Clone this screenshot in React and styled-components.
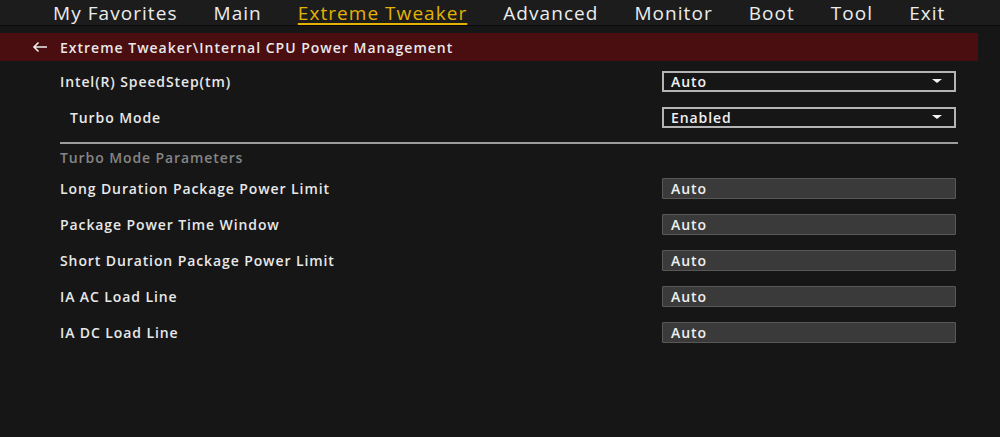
import styled, { createGlobalStyle } from 'styled-components';

const GlobalStyle = createGlobalStyle`
    body {
        margin: 0;
        background: #161616;
        font-family: 'Open Sans', 'Noto Sans', sans-serif;
        color: #e6e6e6;
    }
`;

const Page = styled.div`
    width: 1000px;
    height: 437px;
    overflow: hidden;
    background: #161616;
`;

const Nav = styled.div`
    height: 25px;
    display: flex;
    align-items: center;
    padding-left: 53px;
    gap: 36px;
    background: #1c1c1c;
    border-bottom: 1px solid #0a0a0a;
`;

const Tab = styled.div`
    font-size: 19px;
    font-weight: 500;
    letter-spacing: 1.05px;
    line-height: 26px;
    color: ${(props) => (props.active ? '#e3b204' : '#ececec')};
    text-decoration: ${(props) => (props.active ? 'underline' : 'none')};
    text-decoration-thickness: 2px;
    text-underline-offset: 3px;
`;

const Crumb = styled.div`
    margin-top: 7px;
    width: 978px;
    height: 28px;
    display: flex;
    align-items: center;
    padding-left: 32px;
    box-sizing: border-box;
    background: #4a0d10;
    font-size: 14px;
    font-weight: 600;
    letter-spacing: 1px;
    color: #e8e8e8;
`;

const Arrow = styled.svg`
    width: 16px;
    height: 12px;
    margin-right: 12px;
`;

const Content = styled.div`
    margin-top: 2px;
    padding-left: 60px;
    width: 898px;
`;

const Row = styled.div`
    height: 36px;
    display: grid;
    grid-template-columns: 1fr 294px;
    align-items: center;
    width: 896px;
`;

const Label = styled.div`
    font-size: 14px;
    font-weight: 600;
    letter-spacing: 0.9px;
    color: #e8e8e8;
    padding-left: ${(props) => (props.indent ? '10px' : '0')};
`;

const Select = styled.div`
    height: 21px;
    box-sizing: border-box;
    border: 2px solid #b4b4b4;
    display: flex;
    align-items: center;
    justify-content: space-between;
    padding: 0 12px 0 7px;
    font-size: 14px;
    font-weight: 600;
    letter-spacing: 0.9px;
    color: #f0f0f0;
`;

const Caret = styled.span`
    width: 0;
    height: 0;
    border-left: 5px solid transparent;
    border-right: 5px solid transparent;
    border-top: 4px solid #f2f2f2;
`;

const Field = styled.div`
    height: 21px;
    box-sizing: border-box;
    border: 1px solid #585858;
    border-radius: 1px;
    background: #3a3a3a;
    display: flex;
    align-items: center;
    padding-left: 8px;
    font-size: 14px;
    font-weight: 600;
    letter-spacing: 0.9px;
    color: #efefef;
`;

const Divider = styled.div`
    margin-top: 7px;
    height: 2px;
    background: #9c9c9c;
`;

const Section = styled.div`
    height: 26px;
    display: flex;
    align-items: center;
    font-size: 14px;
    font-weight: 600;
    letter-spacing: 0.9px;
    color: #858585;
`;

const tabs = ['My Favorites', 'Main', 'Extreme Tweaker', 'Advanced', 'Monitor', 'Boot', 'Tool', 'Exit'];

const params = [
    'Long Duration Package Power Limit',
    'Package Power Time Window',
    'Short Duration Package Power Limit',
    'IA AC Load Line',
    'IA DC Load Line',
];

const App = () => {
    return (
        <Page>
            <GlobalStyle />
            <Nav>
                {tabs.map((t) => (
                    <Tab key={t} active={t === 'Extreme Tweaker'}>
                        {t}
                    </Tab>
                ))}
            </Nav>
            <Crumb>
                <Arrow viewBox='0 0 16 12'>
                    <path d='M15 6H2M6.5 1.5L2 6l4.5 4.5' fill='none' stroke='#ececec' strokeWidth='1.6' />
                </Arrow>
                Extreme Tweaker\Internal CPU Power Management
            </Crumb>
            <Content>
                <Row>
                    <Label>Intel(R) SpeedStep(tm)</Label>
                    <Select>
                        Auto
                        <Caret />
                    </Select>
                </Row>
                <Row>
                    <Label indent>Turbo Mode</Label>
                    <Select>
                        Enabled
                        <Caret />
                    </Select>
                </Row>
                <Divider />
                <Section>Turbo Mode Parameters</Section>
                {params.map((p) => (
                    <Row key={p}>
                        <Label>{p}</Label>
                        <Field>Auto</Field>
                    </Row>
                ))}
            </Content>
        </Page>
    );
};

export default App;
